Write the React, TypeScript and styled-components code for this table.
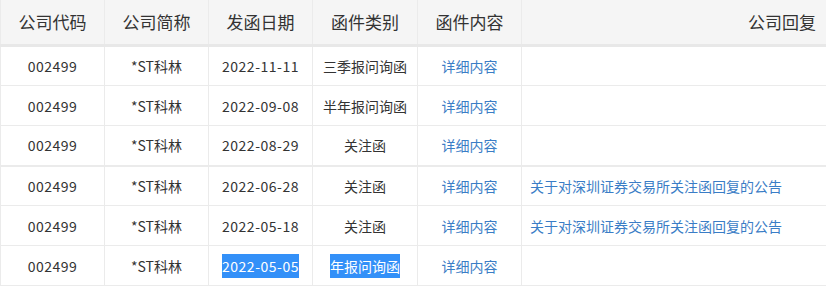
import React from "react";
import styled, { createGlobalStyle } from "styled-components";

const Global = createGlobalStyle`
  html, body { margin: 0; padding: 0; background: #fff; }
  body { font-family: "Noto Sans CJK SC", "Noto Sans", sans-serif; color: #333; }
`;

const Table = styled.table`
  border-collapse: collapse;
  table-layout: fixed;
  width: 827px;
  border-left: 1px solid #ebebeb;
`;

const HeadCell = styled.th<{ $align?: string }>`
  height: 45px;
  padding: 0 ${(p) => (p.$align === "right" ? "10px" : "0")} 0 0;
  background: #f5f5f5;
  font-weight: 400;
  font-size: 17px;
  color: #333;
  text-align: ${(p) => p.$align || "center"};
  border-right: 1px solid #ebebeb;
  border-bottom: 3px solid #e8e8e8;
  box-sizing: border-box;
  line-height: 44px;
`;

const Row = styled.tr<{ $thick?: boolean }>`
  height: 40px;
  & > td {
    border-bottom: ${(p) => (p.$thick ? "2px" : "1px")} solid #ebebeb;
  }
`;

const Cell = styled.td<{ $align?: string; $num?: boolean }>`
  padding: 0 ${(p) => (p.$align === "left" ? "0 0 8px" : "0")};
  font-size: 14px;
  color: #333;
  letter-spacing: ${(p) => (p.$num ? "0.5px" : "0")};
  text-align: ${(p) => p.$align || "center"};
  border-right: 1px solid #ebebeb;
  box-sizing: border-box;
  white-space: nowrap;
  overflow: hidden;
`;

const Link = styled.a`
  color: #3a7dc6;
  text-decoration: none;
  font-size: 14px;
`;

const Selected = styled.span`
  background: #3390f8;
  color: #fff;
  padding: 2px 0;
`;

type R = { date: string; type: string; reply?: string; sel?: boolean; thick?: boolean };

const rows: R[] = [
  { date: "2022-11-11", type: "三季报问询函" },
  { date: "2022-09-08", type: "半年报问询函" },
  { date: "2022-08-29", type: "关注函", thick: true },
  { date: "2022-06-28", type: "关注函", reply: "关于对深圳证券交易所关注函回复的公告" },
  { date: "2022-05-18", type: "关注函", reply: "关于对深圳证券交易所关注函回复的公告" },
  { date: "2022-05-05", type: "年报问询函", sel: true },
];

export default function App() {
  return (
    <>
      <Global />
      <Table>
        <colgroup>
          <col style={{ width: 104 }} />
          <col style={{ width: 104 }} />
          <col style={{ width: 104 }} />
          <col style={{ width: 105 }} />
          <col style={{ width: 104 }} />
          <col />
        </colgroup>
        <thead>
          <tr>
            <HeadCell>公司代码</HeadCell>
            <HeadCell>公司简称</HeadCell>
            <HeadCell>发函日期</HeadCell>
            <HeadCell>函件类别</HeadCell>
            <HeadCell>函件内容</HeadCell>
            <HeadCell $align="right">公司回复</HeadCell>
          </tr>
        </thead>
        <tbody>
          {rows.map((r, i) => (
            <Row key={i} $thick={r.thick}>
              <Cell $num>002499</Cell>
              <Cell>*ST科林</Cell>
              <Cell $num>{r.sel ? <Selected>{r.date} </Selected> : r.date}</Cell>
              <Cell>{r.sel ? <Selected>{r.type}</Selected> : r.type}</Cell>
              <Cell>
                <Link href="#">详细内容</Link>
              </Cell>
              <Cell $align="left">{r.reply ? <Link href="#">{r.reply}</Link> : null}</Cell>
            </Row>
          ))}
        </tbody>
      </Table>
    </>
  );
}
